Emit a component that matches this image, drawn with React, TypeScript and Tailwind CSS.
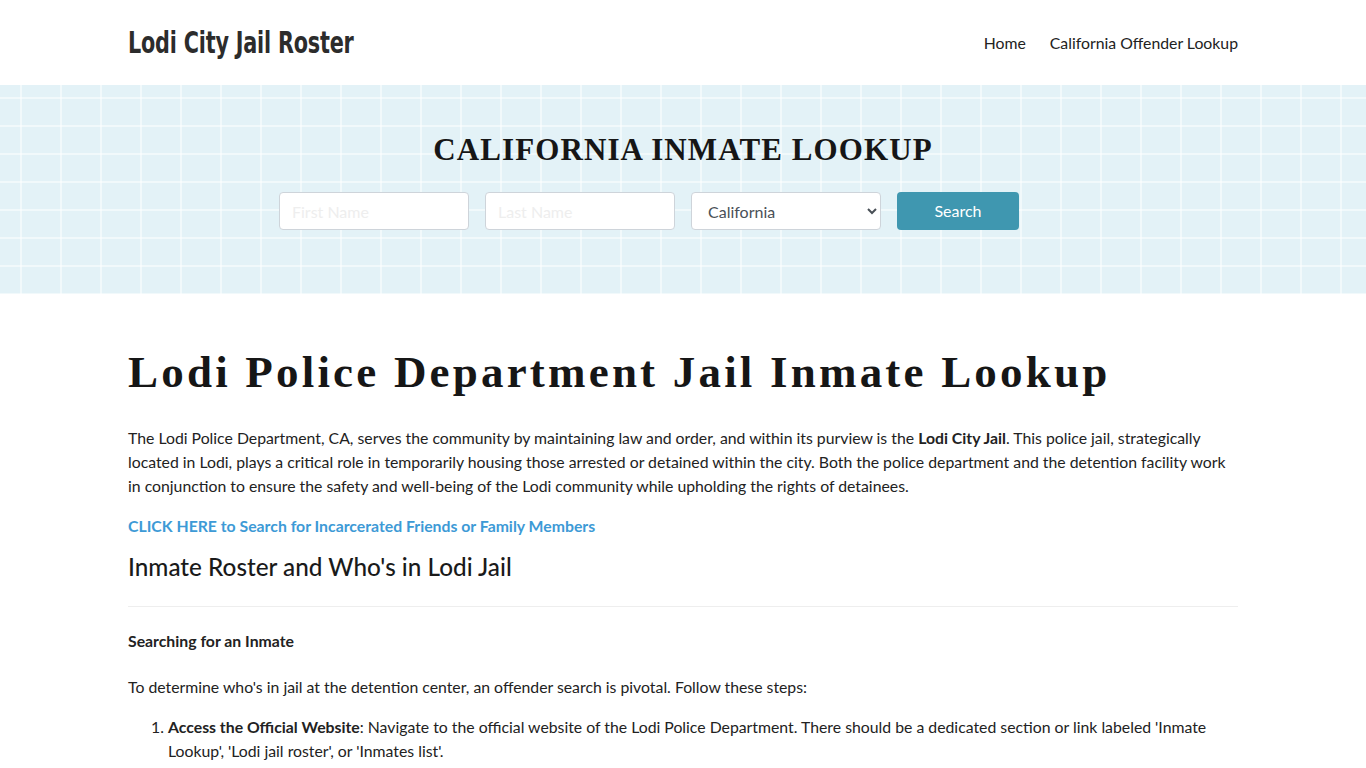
const STATES = ["California"];

export default function App() {
  return (
    <div className="min-h-screen bg-white font-['Lato','Noto_Sans',sans-serif] text-[#222]">
      <header className="h-[85px]">
        <div className="mx-auto flex h-full w-[1110px] items-center justify-between">
          <a className="inline-block origin-left scale-x-[0.67] font-['DejaVu_Sans',sans-serif] text-[31px] font-bold tracking-[-0.3px] text-[#2c2c2c]">
            Lodi City Jail Roster
          </a>
          <nav className="flex gap-6 text-[15.8px] text-[#222]">
            <a>Home</a>
            <a>California Offender Lookup</a>
          </nav>
        </div>
      </header>

      <section className="h-[209px] bg-[#e3f2f7] bg-[linear-gradient(to_right,rgba(255,255,255,0.5)_2px,transparent_2px),linear-gradient(to_bottom,rgba(255,255,255,0.5)_2px,transparent_2px)] bg-[size:40px_28px] bg-[position:20px_12px]">
        <div className="flex flex-col items-center pt-[48px]">
          <h2 className="font-['Liberation_Serif',serif] text-[31px] font-bold uppercase leading-[34px] tracking-[1.1px] text-[#161616]">
            California Inmate Lookup
          </h2>
          <form className="mr-[68px] mt-[25px] flex gap-4">
            <input
              placeholder="First Name"
              className="h-[38px] w-[190px] rounded border border-[#ced4da] bg-white px-3 text-[16px] placeholder:text-[#eee]"
            />
            <input
              placeholder="Last Name"
              className="h-[38px] w-[190px] rounded border border-[#ced4da] bg-white px-3 text-[16px] placeholder:text-[#eee]"
            />
            <select className="h-[38px] w-[190px] rounded border border-[#ced4da] bg-white px-3 text-[16px] text-[#495057]">
              {STATES.map((s) => (
                <option key={s}>{s}</option>
              ))}
            </select>
            <button
              type="button"
              className="h-[38px] w-[122px] rounded bg-[#3f97b0] text-[16px] text-white"
            >
              Search
            </button>
          </form>
        </div>
      </section>

      <main className="mx-auto w-[1110px] pt-[50px]">
        <h1 className="font-['Liberation_Serif',serif] text-[45px] font-bold leading-[56px] tracking-[3.2px] text-[#161616]">
          Lodi Police Department Jail Inmate Lookup
        </h1>
        <p className="mt-[26px] text-[15.8px] leading-[24px]">
          The Lodi Police Department, CA, serves the community by maintaining law and order, and within its purview is the{" "}
          <b>Lodi City Jail</b>. This police jail, strategically located in Lodi, plays a critical role in temporarily
          housing those arrested or detained within the city. Both the police department and the detention facility work
          in conjunction to ensure the safety and well-being of the Lodi community while upholding the rights of
          detainees.
        </p>
        <p className="mt-4 text-[15.8px] leading-[24px]">
          <a className="font-bold text-[#3d9ad6]">CLICK HERE to Search for Incarcerated Friends or Family Members</a>
        </p>
        <h3 className="mt-[12px] text-[24.3px] font-medium leading-[34px] text-[#1a1a1a]">
          Inmate Roster and Who's in Lodi Jail
        </h3>
        <hr className="mt-[22px] border-t border-[#eee]" />
        <p className="mt-[22px] text-[15.8px] font-bold leading-[24px]">Searching for an Inmate</p>
        <p className="mt-[22px] text-[15.8px] leading-[24px]">
          To determine who's in jail at the detention center, an offender search is pivotal. Follow these steps:
        </p>
        <ol className="mt-4 list-decimal pl-10 text-[15.8px] leading-[24px]">
          <li>
            <b>Access the Official Website</b>: Navigate to the official website of the Lodi Police Department. There
            should be a dedicated section or link labeled 'Inmate Lookup', 'Lodi jail roster', or 'Inmates list'.
          </li>
          <li>
            <b>Enter the Details</b>: Use the search tool and provide the inmate's first and last name, or their booking
            number if known.
          </li>
        </ol>
      </main>
    </div>
  );
}
